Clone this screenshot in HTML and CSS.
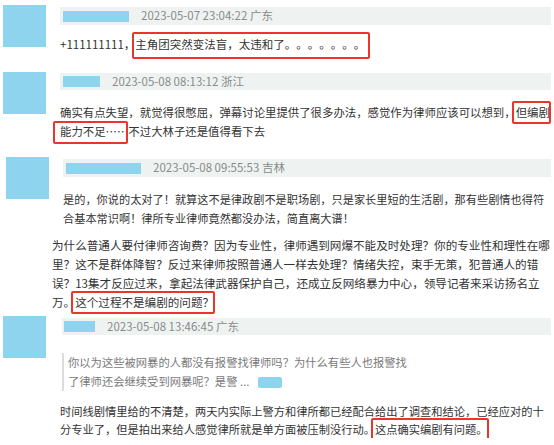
FILE: index.html
```html
<!DOCTYPE html>
<html lang="zh-CN">
<head>
<meta charset="UTF-8" />
<title>评论</title>
<link rel="stylesheet" href="styles.css">
</head>
<body>

<div class="comment c1">
  <div class="avatar"></div>
  <div class="body">
    <div class="meta"><span class="name" style="width:66px"></span><span class="date">2023-05-07 23:04:22 广东</span></div>
    <p class="text">+111111111，<span class="mark mark-tall">主角团突然变法盲，太违和了。。。。。。。</span></p>
  </div>
</div>

<div class="comment c2">
  <div class="avatar"></div>
  <div class="body">
    <div class="meta"><span class="name" style="width:37px"></span><span class="date">2023-05-08 08:13:12 浙江</span></div>
    <p class="text">确实有点失望，就觉得很憋屈，弹幕讨论里提供了很多办法，感觉作为律师应该可以想到，<span class="mark">但编剧</span><br><span class="mark mark-wide">能力不足……</span>不过大林子还是值得看下去</p>
  </div>
</div>

<div class="comment c3">
  <div class="avatar"></div>
  <div class="body">
    <div class="meta"><span class="name" style="width:75px"></span><span class="date">2023-05-08 09:55:53 吉林</span></div>
    <p class="text">是的，你说的太对了！就算这不是律政剧不是职场剧，只是家长里短的生活剧，那有些剧情也得符<br>合基本常识啊！律所专业律师竟然都没办法，简直离大谱！</p>
  </div>
</div>

<p class="text reply">为什么普通人要付律师咨询费？因为专业性，律师遇到网爆不能及时处理？你的专业性和理性在哪<br>里？这不是群体降智？反过来律师按照普通人一样去处理？情绪失控，束手无策，犯普通人的错<br>误？13集才反应过来，拿起法律武器保护自己，还成立反网络暴力中心，领导记者来采访扬名立<br>万。<span class="mark">这个过程不是编剧的问题？</span></p>

<div class="comment c5">
  <div class="avatar"></div>
  <div class="body">
    <div class="meta"><span class="name" style="width:31px"></span><span class="date">2023-05-08 13:46:45 广东</span></div>
    <div class="quote">你以为这些被网暴的人都没有报警找律师吗？为什么有些人也报警找<br>了律师还会继续受到网暴呢？是警 ...<span class="blur"></span></div>
    <p class="text">时间线剧情里给的不清楚，两天内实际上警方和律所都已经配合给出了调查和结论，已经应对的十<br>分专业了，但是拍出来给人感觉律所就是单方面被压制没行动。<span class="mark">这点确实编剧有问题。</span></p>
  </div>
</div>

</body>
</html>
```

FILE: styles.css
```css
/* Base */
* {
  box-sizing: border-box;
}
body {
  margin: 0;
  width: 554px;
  overflow: hidden;
  background: #fff;
  font-family: "Noto Sans CJK SC", "Liberation Sans", sans-serif;
  font-size: 11.5px;
  color: #333;
  text-spacing-trim: space-all;
}

/* Comment row */
.comment {
  display: flex;
  padding: 0 3px;
}
.avatar {
  flex: 0 0 43px;
  height: 42px;
  background: #8fd4ef;
}
.body {
  flex: 1;
  min-width: 0;
  margin-left: 14px;
}
.meta {
  display: flex;
  align-items: center;
  gap: 12px;
  height: 18px;
  padding-left: 3px;
  background: #eef3f2;
}
.name {
  height: 11px;
  background: #8fd4ef;
}
.date {
  color: #8a8a8a;
  line-height: 1;
}
.text {
  margin: 0;
  line-height: 19px;
  white-space: nowrap;
}

/* Red annotation boxes */
.mark {
  position: relative;
  display: inline-block;
}
.mark::after {
  content: '';
  position: absolute;
  top: -2px;
  bottom: -2px;
  left: -4px;
  right: -1px;
  border: 2px solid #e8362d;
  border-radius: 2px;
}
.mark-tall::after {
  top: -3px;
  bottom: -5px;
  left: -3px;
  right: -5px;
}
.mark-wide::after {
  top: -1px;
  bottom: -3px;
  left: -7px;
  right: 0;
}

/* Individual comments */
.c1 {
  margin-top: 5px;
}
.c1 .body {
  padding-top: 2px;
}
.c1 .text {
  margin-top: 10px;
}

.c2 {
  margin-top: 18px;
}
.c2 .body {
  padding-top: 1px;
}
.c2 .meta {
  height: 17px;
}
.c2 .text {
  margin-top: 12.5px;
  font-size: 11.4px;
}

.c3 {
  margin-top: 16.5px;
  padding-left: 6px;
}
.c3 .body {
  padding-top: 2px;
}
.c3 .text {
  margin-top: 12.5px;
  font-size: 11.2px;
}

.reply {
  margin-top: 8px;
  padding-left: 52px;
  font-size: 11.58px;
}

.c5 {
  margin-top: 4.5px;
}
.c5 .body {
  padding-top: 2px;
  margin-left: 16px;
}
.c5 .meta {
  height: 17px;
  padding-left: 2px;
}
.quote {
  margin-top: 17.5px;
  padding-left: 4px;
  border-left: 2px solid #dcdcdc;
  line-height: 19px;
  font-size: 11.3px;
  color: #7a7a7a;
  white-space: nowrap;
}
.blur {
  display: inline-block;
  width: 24px;
  height: 11px;
  margin-left: 9px;
  vertical-align: -2px;
  background: #8fd4ef;
  border-radius: 2px;
}
.c5 .text {
  margin-top: 11.5px;
  margin-left: -2px;
  line-height: 18px;
  font-size: 11.26px;
}
```
